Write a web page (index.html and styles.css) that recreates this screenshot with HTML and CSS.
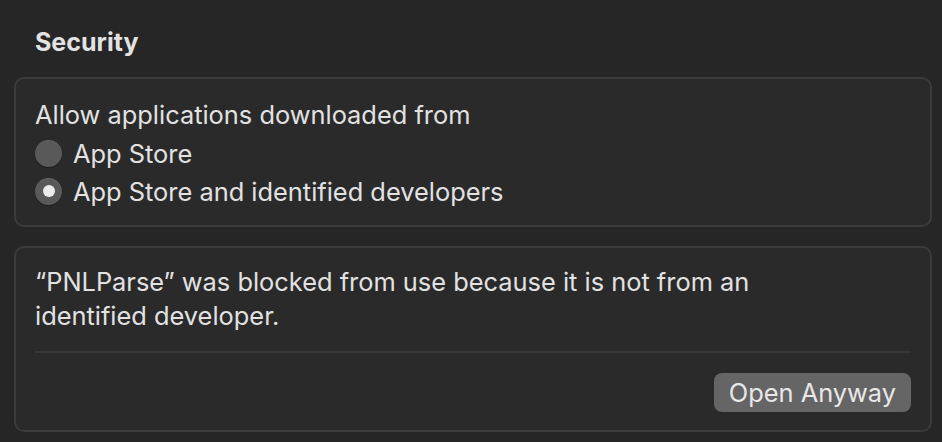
FILE: index.html
```html
<!DOCTYPE html>
<html lang="en">
<head>
    <meta charset="UTF-8">
    <title>Security</title>
    <link rel="stylesheet" href="styles.css">
</head>
<body>
    <div class="pane">
        <h2 class="section-title">Security</h2>

        <!-- Download source -->
        <div class="group">
            <div class="label">Allow applications downloaded from</div>
            <label class="radio-row">
                <span class="radio"></span>
                <span>App Store</span>
            </label>
            <label class="radio-row">
                <span class="radio checked"></span>
                <span>App Store and identified developers</span>
            </label>
        </div>

        <!-- Blocked app notice -->
        <div class="group notice">
            <p class="notice-text">“PNLParse” was blocked from use because it is not from an identified developer.</p>
            <div class="divider"></div>
            <div class="actions">
                <button class="btn">Open Anyway</button>
            </div>
        </div>
    </div>
</body>
</html>
```

FILE: styles.css
```css
* {
    margin: 0;
    padding: 0;
    box-sizing: border-box;
}

body {
    background: #262626;
    color: #e2e2e2;
    font-family: Inter, "Noto Sans", sans-serif;
    font-size: 25.4px;
    width: 942px;
    height: 442px;
    overflow: hidden;
}

.pane {
    padding: 27px 10px 0 14px;
}

.section-title {
    font-size: 25px;
    font-weight: 700;
    padding-left: 21px;
    height: 50px;
    line-height: 30px;
}

.group {
    background: #2a2a2a;
    border: 2px solid #3b3b3b;
    border-radius: 10px;
    padding: 17px 19px 15px 19px;
}

.label {
    line-height: 38px;
}

.radio-row {
    display: flex;
    align-items: center;
    gap: 11px;
    height: 38px;
}

.radio {
    width: 27px;
    height: 27px;
    border-radius: 50%;
    background: #595959;
    box-shadow: inset 0 1px 0 rgba(255, 255, 255, 0.08), 0 1px 1px rgba(0, 0, 0, 0.3);
    display: flex;
    align-items: center;
    justify-content: center;
}

.radio.checked::after {
    content: "";
    width: 12px;
    height: 12px;
    border-radius: 50%;
    background: #ececec;
}

.notice {
    margin-top: 19px;
    padding-top: 17px;
    padding-bottom: 18px;
}

.notice-text {
    line-height: 34px;
    max-width: 760px;
}

.divider {
    height: 2px;
    background: #383838;
    margin-top: 18px;
}

.actions {
    display: flex;
    justify-content: flex-end;
    padding-top: 20px;
}

.btn {
    background: #656565;
    color: #e8e8e8;
    border: none;
    border-radius: 8px;
    font-family: inherit;
    font-size: 25.4px;
    height: 39px;
    padding: 0 15px;
}
```
